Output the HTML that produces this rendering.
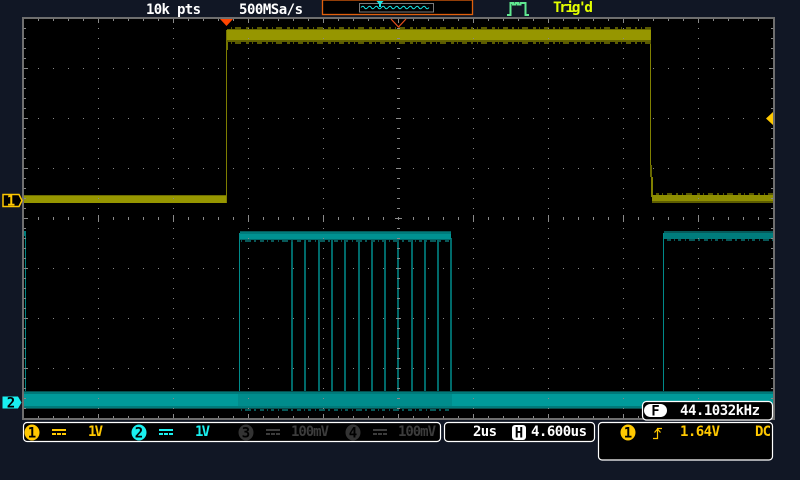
<!DOCTYPE html>
<html><head><meta charset="utf-8"><style>
html,body{margin:0;padding:0;background:#111725;width:800px;height:480px;overflow:hidden}
svg{display:block}
text{font-family:"DejaVu Sans Mono","Liberation Mono",monospace;font-weight:bold;font-size:14px}
.c{text-anchor:middle;font-size:14px}
</style></head><body>
<svg width="800" height="480" viewBox="0 0 800 480" xmlns="http://www.w3.org/2000/svg">
<defs>
<pattern id="dv" x="98" y="18" width="75" height="10" patternUnits="userSpaceOnUse"><rect x="0" y="0" width="1" height="1" fill="#8a8a8a"/></pattern>
<pattern id="dh" x="23" y="18" width="15" height="50" patternUnits="userSpaceOnUse"><rect x="0" y="0" width="1" height="1" fill="#8a8a8a"/></pattern>
<pattern id="tx" x="23" y="0" width="15" height="10" patternUnits="userSpaceOnUse"><rect x="0" y="0" width="1" height="10" fill="#8a8a8a"/></pattern>
<pattern id="ty" x="0" y="18" width="10" height="10" patternUnits="userSpaceOnUse"><rect x="0" y="0" width="10" height="1" fill="#8a8a8a"/></pattern>
<pattern id="ny" x="0" y="0" width="41" height="2" patternUnits="userSpaceOnUse"><g fill="#5a5a00"><rect x="0" width="3" height="2"/><rect x="6" width="1" height="2"/><rect x="11" width="5" height="2"/><rect x="20" width="2" height="2"/><rect x="26" width="1" height="2"/><rect x="30" width="6" height="2"/></g></pattern>
<pattern id="nc" x="0" y="0" width="37" height="2" patternUnits="userSpaceOnUse"><g fill="#085858"><rect x="1" width="4" height="2"/><rect x="8" width="1" height="2"/><rect x="12" width="3" height="2"/><rect x="19" width="1" height="2"/><rect x="23" width="6" height="2"/><rect x="32" width="2" height="2"/></g></pattern>
</defs>

<rect x="22" y="17" width="753" height="403" fill="#6e6e6e"/>
<rect x="24" y="19" width="749" height="399" fill="#000"/>

<g shape-rendering="crispEdges">
<!-- yellow trace -->
<rect x="226" y="30" width="2" height="20" fill="#767600"/>
<rect x="226" y="50" width="1" height="153" fill="#7e7e00"/>
<rect x="650" y="40" width="1" height="125" fill="#808000"/>
<rect x="650" y="165" width="2" height="12" fill="#666600"/>
<rect x="651" y="177" width="2" height="20" fill="#808000"/>
<rect x="227" y="27" width="424" height="2" fill="url(#ny)"/>
<rect x="227" y="29" width="424" height="1" fill="#6e6e00"/>
<rect x="227" y="30" width="424" height="10" fill="#969600"/>
<rect x="227" y="40" width="424" height="2" fill="#626200"/>
<rect x="227" y="42" width="424" height="2" fill="url(#ny)"/>
<rect x="24" y="195" width="202" height="1" fill="#6e6e00"/>
<rect x="24" y="196" width="202" height="7" fill="#969600"/>
<rect x="652" y="193" width="121" height="2" fill="url(#ny)"/>
<rect x="652" y="195" width="121" height="6" fill="#8e8e00"/>
<rect x="652" y="201" width="121" height="2" fill="#5e5e00"/>
<!-- cyan trace -->
<rect x="24" y="231" width="2" height="5" fill="#007c7c"/>
<rect x="25" y="236" width="1" height="155" fill="#008080"/>
<rect x="239" y="233" width="1" height="160" fill="#008a8a"/>
<g fill="#006a6a">
<rect x="291" y="238" width="2" height="155"/>
<rect x="304" y="238" width="2" height="155"/>
<rect x="318" y="238" width="2" height="155"/>
<rect x="331" y="238" width="2" height="155"/>
<rect x="344" y="238" width="2" height="155"/>
<rect x="358" y="238" width="2" height="155"/>
<rect x="371" y="238" width="2" height="155"/>
<rect x="384" y="238" width="2" height="155"/>
<rect x="397" y="238" width="2" height="155"/>
<rect x="411" y="238" width="2" height="155"/>
<rect x="424" y="238" width="2" height="155"/>
<rect x="437" y="238" width="2" height="155"/>
<rect x="450" y="238" width="2" height="155"/>
</g>
<rect x="663" y="233" width="1" height="160" fill="#008a8a"/>
<rect x="240" y="231" width="211" height="1" fill="#065a5a"/>
<rect x="240" y="232" width="211" height="2" fill="#007c7c"/>
<rect x="240" y="234" width="211" height="5" fill="#009292"/>
<rect x="240" y="239" width="211" height="1" fill="#006c6c"/>
<rect x="240" y="240" width="211" height="2" fill="url(#nc)"/>
<rect x="664" y="231" width="109" height="2" fill="#065a5a"/>
<rect x="664" y="233" width="109" height="6" fill="#007c7c"/>
<rect x="664" y="239" width="109" height="2" fill="url(#nc)"/>
<rect x="24" y="391" width="749" height="1" fill="#064e4e"/>
<rect x="24" y="392" width="749" height="2" fill="#007a7a"/>
<rect x="24" y="394" width="749" height="12" fill="#009a9a"/>
<rect x="24" y="406" width="749" height="2" fill="#007a7a"/>
<rect x="24" y="408" width="749" height="1" fill="#0a4a4a"/>
<rect x="238" y="394" width="214" height="12" fill="#008c8c"/>
<rect x="238" y="409" width="214" height="2" fill="url(#nc)"/>

<!-- grid -->
<rect x="24" y="19" width="749" height="399" fill="url(#dv)"/>
<rect x="24" y="19" width="749" height="399" fill="url(#dh)"/>
<rect x="38" y="217" width="735" height="3" fill="url(#tx)"/>
<rect x="397" y="28" width="3" height="390" fill="url(#ty)"/>
<g fill="#8a8a8a">
<rect x="38" y="19" width="735" height="2" fill="url(#tx)"/>
<rect x="38" y="416" width="735" height="2" fill="url(#tx)"/>
<rect x="24" y="28" width="2" height="390" fill="url(#ty)"/>
<rect x="771" y="28" width="2" height="390" fill="url(#ty)"/>
<rect x="98" y="19" width="1" height="4"/><rect x="173" y="19" width="1" height="4"/><rect x="248" y="19" width="1" height="4"/><rect x="323" y="19" width="1" height="4"/><rect x="398" y="19" width="1" height="4"/><rect x="473" y="19" width="1" height="4"/><rect x="548" y="19" width="1" height="4"/><rect x="623" y="19" width="1" height="4"/><rect x="698" y="19" width="1" height="4"/>
<rect x="98" y="414" width="1" height="4"/><rect x="173" y="414" width="1" height="4"/><rect x="248" y="414" width="1" height="4"/><rect x="323" y="414" width="1" height="4"/><rect x="398" y="414" width="1" height="4"/><rect x="473" y="414" width="1" height="4"/><rect x="548" y="414" width="1" height="4"/><rect x="623" y="414" width="1" height="4"/><rect x="698" y="414" width="1" height="4"/>
<rect x="98" y="215" width="1" height="7"/><rect x="173" y="215" width="1" height="7"/><rect x="248" y="215" width="1" height="7"/><rect x="323" y="215" width="1" height="7"/><rect x="473" y="215" width="1" height="7"/><rect x="548" y="215" width="1" height="7"/><rect x="623" y="215" width="1" height="7"/><rect x="698" y="215" width="1" height="7"/>
<rect x="24" y="68" width="4" height="1"/><rect x="24" y="118" width="4" height="1"/><rect x="24" y="168" width="4" height="1"/><rect x="24" y="218" width="4" height="1"/><rect x="24" y="268" width="4" height="1"/><rect x="24" y="318" width="4" height="1"/><rect x="24" y="368" width="4" height="1"/>
<rect x="769" y="68" width="4" height="1"/><rect x="769" y="118" width="4" height="1"/><rect x="769" y="168" width="4" height="1"/><rect x="769" y="218" width="4" height="1"/><rect x="769" y="268" width="4" height="1"/><rect x="769" y="318" width="4" height="1"/><rect x="769" y="368" width="4" height="1"/>
<rect x="396" y="68" width="5" height="1"/><rect x="396" y="118" width="5" height="1"/><rect x="396" y="168" width="5" height="1"/><rect x="395" y="218" width="7" height="1"/><rect x="396" y="268" width="5" height="1"/><rect x="396" y="318" width="5" height="1"/><rect x="396" y="368" width="5" height="1"/>
</g>
</g>

<!-- top markers -->
<polygon points="220,19 233,19 226.5,26" fill="#ff4500"/>
<path d="M391 19 L398.5 27 L406 19" fill="none" stroke="#e8501c" stroke-width="1.2"/>

<!-- top bar -->
<text x="146" y="14" textLength="55" fill="#fff">10k pts</text>
<text x="239" y="14" textLength="64" fill="#fff">500MSa/s</text>
<rect x="322.5" y="0" width="150" height="14.5" fill="#000" stroke="#e0600c" stroke-width="1.3"/>
<rect x="359.5" y="3.5" width="74" height="8.5" fill="#000" stroke="#7a7a7a" stroke-width="1"/>
<path d="M361 7.5 q2 -2.6 3.4 0 t3.4 0 t3.4 0 t3.4 0 t3.4 0 t3.4 0 t3.4 0 t3.4 0 t3.4 0 t3.4 0 t3.4 0 t3.4 0 t3.4 0 t3.4 0 t3.4 0 t3.4 0 t3.4 0 t3.4 0 t3.4 0 t3.4 0" fill="none" stroke="#19e6e6" stroke-width="1"/>
<polygon points="376.5,1 383.5,1 381,4 381,7 379,7 379,4" fill="#19e6e6"/>
<path d="M507 15 H510.5 V3 H513 V4.5 H515.5 V3 H518 V4.5 H520.5 V3 H525.5 V15 H529" fill="none" stroke="#5fe890" stroke-width="2"/>
<text x="553" y="12" textLength="40" style="font-size:14.5px" fill="#e4ff00">Trig'd</text>

<!-- left markers -->
<path d="M3 194.5 H19 L22 200.5 L19 206.5 H3 Z" fill="#000" stroke="#ffc800" stroke-width="1.5"/>
<text x="11" y="205.5" class="c" fill="#ffc800">1</text>
<polygon points="2.5,396.5 18,396.5 21.5,402.5 18,408.5 2.5,408.5" fill="#19f0f0"/>
<text x="11" y="407.5" class="c" fill="#000">2</text>
<!-- trigger level -->
<polygon points="766,118.5 773,112 773,125" fill="#ffc800"/>

<!-- bottom ch box -->
<rect x="23.5" y="422.5" width="417" height="19" rx="3.5" fill="#000" stroke="#fff" stroke-width="1.2"/>
<ellipse cx="32" cy="432.5" rx="7.5" ry="8" fill="#ffc800"/>
<text x="32" y="437.5" class="c" fill="#000">1</text>
<g shape-rendering="crispEdges" fill="#ffc800"><rect x="52" y="429" width="14" height="2"/><rect x="52" y="433" width="4" height="2"/><rect x="57" y="433" width="4" height="2"/><rect x="62" y="433" width="4" height="2"/></g>
<text x="88" y="436" textLength="15" fill="#ffc800">1V</text>
<ellipse cx="139" cy="432.5" rx="7.5" ry="8" fill="#19f0f0"/>
<text x="139" y="437.5" class="c" fill="#000">2</text>
<g shape-rendering="crispEdges" fill="#19f0f0"><rect x="159" y="429" width="14" height="2"/><rect x="159" y="433" width="4" height="2"/><rect x="164" y="433" width="4" height="2"/><rect x="169" y="433" width="4" height="2"/></g>
<text x="195" y="436" textLength="15" fill="#19f0f0">1V</text>
<ellipse cx="246" cy="432.5" rx="7.5" ry="8" fill="#333"/>
<text x="246" y="437.5" class="c" fill="#000">3</text>
<g shape-rendering="crispEdges" fill="#3c3c3c"><rect x="266" y="429" width="14" height="2"/><rect x="266" y="433" width="4" height="2"/><rect x="271" y="433" width="4" height="2"/><rect x="276" y="433" width="4" height="2"/></g>
<text x="291" y="436" textLength="38" fill="#3c3c3c">100mV</text>
<ellipse cx="353" cy="432.5" rx="7.5" ry="8" fill="#333"/>
<text x="353" y="437.5" class="c" fill="#000">4</text>
<g shape-rendering="crispEdges" fill="#3c3c3c"><rect x="373" y="429" width="14" height="2"/><rect x="373" y="433" width="4" height="2"/><rect x="378" y="433" width="4" height="2"/><rect x="383" y="433" width="4" height="2"/></g>
<text x="398" y="436" textLength="38" fill="#3c3c3c">100mV</text>

<!-- timebase -->
<rect x="444.5" y="422.5" width="150" height="19" rx="3.5" fill="#000" stroke="#fff" stroke-width="1.2"/>
<text x="473" y="436" textLength="24" fill="#fff">2us</text>
<rect x="512" y="425" width="14" height="15" rx="3" fill="#fff"/>
<text x="519" y="437.5" class="c" fill="#000">H</text>
<text x="531" y="436" textLength="56" fill="#fff">4.600us</text>

<!-- trigger box -->
<rect x="598.5" y="422.5" width="174" height="37.5" rx="3.5" fill="#000" stroke="#fff" stroke-width="1.2"/>
<ellipse cx="628" cy="432.5" rx="7.5" ry="8" fill="#ffc800"/>
<text x="628" y="437.5" class="c" fill="#000">1</text>
<path d="M653 438.5 H657.5 V428.5 H662 M654.5 432.5 L657.5 429 L660.5 432.5" fill="none" stroke="#ffc800" stroke-width="1.2"/>
<text x="680" y="436" textLength="40" fill="#ffc800">1.64V</text>
<text x="755" y="436" textLength="16" fill="#ffc800">DC</text>

<!-- frequency -->
<rect x="642.5" y="401.5" width="130" height="18.5" rx="4" fill="#000" stroke="#fff" stroke-width="1.2"/>
<rect x="644" y="404" width="23" height="13" rx="6.5" fill="#fff"/>
<text x="655.5" y="415.5" class="c" fill="#000">F</text>
<text x="680" y="415" textLength="80" fill="#fff">44.1032kHz</text>
</svg>
</body></html>
